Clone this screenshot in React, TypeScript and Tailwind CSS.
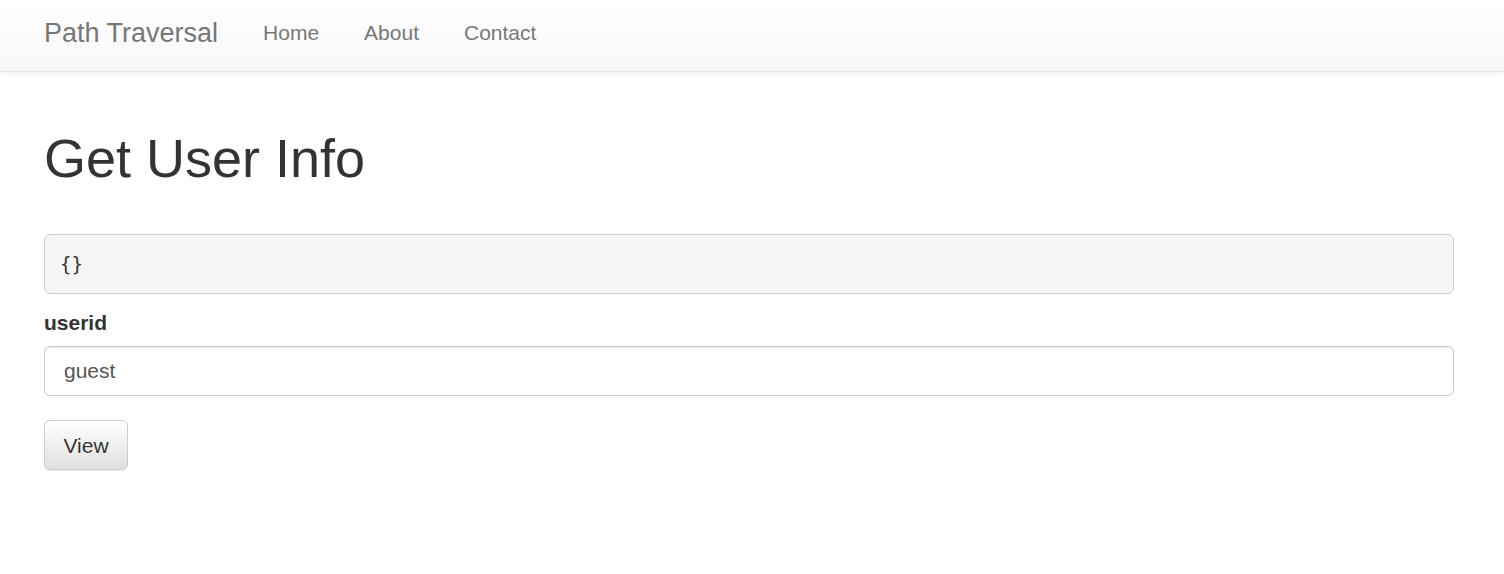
import React from "react";

export default function App() {
  return (
    <div className="min-h-[574px] bg-white text-[#333] text-[21px]" style={{ fontFamily: '"Liberation Sans", Arial, sans-serif' }}>
      <nav className="h-[72px] border-b border-[#e7e7e7] bg-gradient-to-b from-white to-[#f8f8f8] shadow-[0_1px_7px_rgba(0,0,0,0.075)]">
        <div className="flex h-[71px] items-center pl-[44px] pb-[5px]">
          <a className="text-[27px] text-[#777] leading-none">Path Traversal</a>
          <div className="ml-[45px] mb-[2px] flex gap-[45px] text-[21px] leading-none text-[#777]">
            <a>Home</a>
            <a>About</a>
            <a>Contact</a>
          </div>
        </div>
      </nav>
      <div className="px-[44px] pr-[50px]">
        <h1 className="mt-[57px] text-[54px] leading-[1.1] font-normal text-[#333]">Get User Info</h1>
        <pre
          className="mt-[46px] h-[60px] rounded-[6px] border border-[#ccc] bg-[#f5f5f5] px-[15px] flex items-center text-[19px] text-[#333]"
          style={{ fontFamily: '"DejaVu Sans Mono", "Liberation Mono", monospace' }}
        >
          {"{}"}
        </pre>
        <label className="mt-[18px] block text-[21px] font-bold leading-[22px] text-[#333]">userid</label>
        <input
          className="mt-[12px] block h-[50px] w-full rounded-[6px] border border-[#ccc] bg-white px-[19px] text-[21px] text-[#555] shadow-[inset_0_1px_1px_rgba(0,0,0,0.075)] outline-none"
          defaultValue="guest"
        />
        <button className="mt-[24px] h-[50px] w-[84px] rounded-[6px] border border-[#ccc] bg-gradient-to-b from-white to-[#e0e0e0] text-[21px] text-[#333] shadow-[0_1px_1px_rgba(0,0,0,0.075)] [text-shadow:0_1px_0_#fff]">
          View
        </button>
      </div>
    </div>
  );
}
